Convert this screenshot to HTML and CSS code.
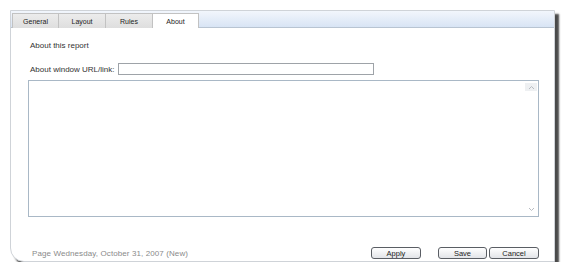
FILE: index.html
```html
<!DOCTYPE html>
<html>
<head>
<meta charset="utf-8">
<link rel="stylesheet" href="styles.css">
</head>
<body>
<div class="panel">
  <div class="tabs">
    <div class="tab">General</div>
    <div class="tab">Layout</div>
    <div class="tab">Rules</div>
    <div class="tab active">About</div>
  </div>
  <div class="content">
    <div class="title">About this report</div>
    <div class="url-row">
      <span class="label">About window URL/link:</span>
      <span class="input"></span>
    </div>
    <div class="textarea">
      <div class="scroll">
        <span class="arrow up"><svg width="7" height="5" viewBox="0 0 7 5"><path d="M1 4 L3.5 1.5 L6 4" fill="none" stroke="#b8bcc2" stroke-width="1"/></svg></span>
        <span class="arrow down"><svg width="7" height="5" viewBox="0 0 7 5"><path d="M1 1 L3.5 3.5 L6 1" fill="none" stroke="#b8bcc2" stroke-width="1"/></svg></span>
      </div>
    </div>
    <div class="footer">
      <span class="status">Page Wednesday, October 31, 2007 (New)</span>
      <span class="btn apply">Apply</span>
      <span class="btn save">Save</span>
      <span class="btn cancel">Cancel</span>
    </div>
  </div>
</div>
</body>
</html>
```
FILE: styles.css
```css
html, body {
  margin: 0;
  padding: 0;
  background: #ffffff;
}
body {
  font-family: "Liberation Sans", Arial, sans-serif;
  font-size: 8px;
  color: #333;
}
.panel {
  margin: 10px 0 0 10px;
  width: 545px;
  height: 252px;
  box-sizing: border-box;
  border: 1px solid #cfd3d8;
  border-radius: 0 0 0 14px;
  box-shadow: 4px 4px 2px #4a4a4a;
  background: #fff;
  display: flex;
  flex-direction: column;
}
.tabs {
  height: 17px;
  box-sizing: border-box;
  padding: 2px 0 0 1px;
  background: linear-gradient(#f2f6fc, #d8e4f4);
  border-bottom: 1px solid #b8c4d2;
  display: flex;
  align-items: stretch;
}
.tab {
  width: 47px;
  box-sizing: border-box;
  background: linear-gradient(#ececec, #dedede);
  border: 1px solid #c2c2c2;
  border-bottom: none;
  border-left: none;
  font-size: 7px;
  color: #222;
  display: flex;
  align-items: center;
  justify-content: center;
  margin-bottom: -1px;
}
.tab:first-child {
  border-left: 1px solid #c2c2c2;
}
.tab.active {
  width: 46px;
  background: #fff;
  border-bottom: none;
}
.content {
  flex: 1;
  display: flex;
  flex-direction: column;
  padding: 0 15px 0 17px;
}
.title {
  margin-top: 13px;
  line-height: 10px;
  height: 10px;
  padding-left: 2px;
}
.url-row {
  margin-top: 12px;
  display: flex;
  align-items: center;
  height: 12px;
  padding-left: 2px;
}
.label {
  width: 88px;
  white-space: nowrap;
}
.input {
  width: 256px;
  height: 12px;
  box-sizing: border-box;
  border: 1px solid #9ea3a8;
  background: #fff;
}
.textarea {
  margin-top: 5px;
  height: 137px;
  box-sizing: border-box;
  border: 1px solid #a9b8c6;
  display: flex;
  justify-content: flex-end;
}
.scroll {
  width: 12px;
  margin-right: 1px;
  display: flex;
  flex-direction: column;
  justify-content: space-between;
  padding: 2px 0 3px;
}
.arrow {
  height: 8px;
  display: flex;
  align-items: center;
  justify-content: center;
}
.arrow.up {
  background: #eef0f2;
}
.footer {
  margin-top: 30px;
  display: flex;
  align-items: center;
  height: 12px;
}
.status {
  color: #8a8a8a;
  padding-left: 4px;
  flex: 1;
  letter-spacing: 0.1px;
}
.btn {
  height: 12px;
  box-sizing: border-box;
  border: 1px solid #5a5e64;
  border-radius: 3px;
  background: linear-gradient(#ffffff, #e2e4e8);
  font-size: 7.5px;
  display: flex;
  align-items: center;
  justify-content: center;
  color: #222;
}
.apply { width: 50px; }
.save { width: 49px; margin-left: 17px; }
.cancel { width: 50px; margin-left: 2px; }
```
